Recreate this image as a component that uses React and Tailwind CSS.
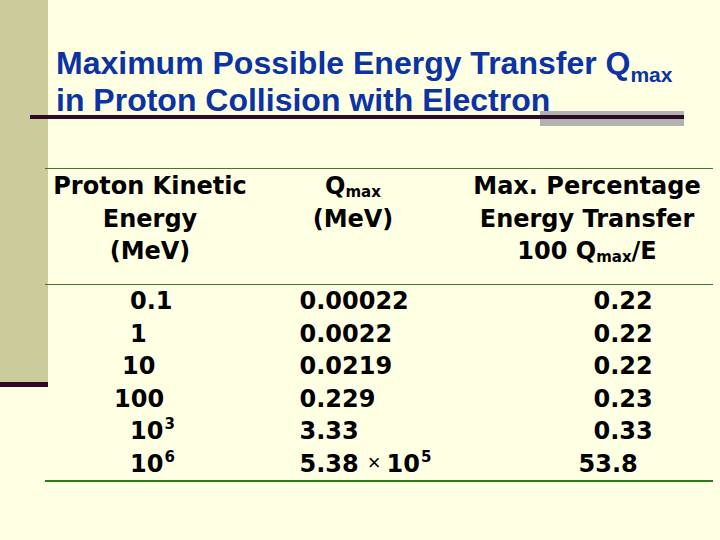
export default function App() {
  const rows = [
    { a: "0.1", ap: "pl-[85px]", b: "0.00022", c: "0.22", cp: "pl-[142.5px]" },
    { a: "1", ap: "pl-[85px]", b: "0.0022", c: "0.22", cp: "pl-[142.5px]" },
    { a: "10", ap: "pl-[77px]", b: "0.0219", c: "0.22", cp: "pl-[142.5px]" },
    { a: "100", ap: "pl-[69px]", b: "0.229", c: "0.23", cp: "pl-[142.5px]" },
    { a: "10", sup: "3", ap: "pl-[85px]", b: "3.33", c: "0.33", cp: "pl-[142.5px]" },
    { a: "10", sup: "6", ap: "pl-[85px]", b: null, c: "53.8", cp: "pl-[127.5px]" },
  ];
  return (
    <div className="w-[720px] h-[540px] bg-[#ffffe3] flex overflow-hidden">
      <div className="w-[48px] shrink-0 flex flex-col">
        <div className="h-[382px] bg-[#cbcb9b]" />
        <div className="h-[5px] bg-[#2e0a28]" />
      </div>
      <div className="flex-1 flex flex-col">
        <div className="pt-[45px] pl-[8px] font-['Liberation_Sans',sans-serif] font-bold text-[32px] leading-[36.5px] text-[#0b33a3] whitespace-nowrap">
          <div>
            Maximum Possible Energy Transfer Q
            <span className="relative top-[8px] text-[21px] leading-none">max</span>
          </div>
          <div>in Proton Collision with Electron</div>
        </div>
        <div className="relative ml-[-18px] w-[654px] h-[4px] mt-[-3px]">
          <div className="absolute left-[510px] top-[-4px] w-[144px] h-[15px] bg-[#b2b2b2]" />
          <div className="absolute inset-0 bg-[#2e0a28]" />
        </div>
        <div className="ml-[-3px] w-[668px] mt-[49px] font-['DejaVu_Sans',sans-serif] font-bold text-[24px] leading-[32.5px] text-black whitespace-nowrap">
          <div className="h-px bg-[#3b7a2b]" />
          <div className="grid grid-cols-[210px_196px_262px] pt-[1px] pb-[16.5px] text-center">
            <div>
              <div>Proton Kinetic</div>
              <div>Energy</div>
              <div>(MeV)</div>
            </div>
            <div>
              <div>
                Q<span className="relative top-[3px] text-[15px] leading-none">max</span>
              </div>
              <div>(MeV)</div>
            </div>
            <div className="pl-[10px]">
              <div>Max. Percentage</div>
              <div>Energy Transfer</div>
              <div>
                100 Q<span className="relative top-[3px] text-[15px] leading-none">max</span>/E
              </div>
            </div>
          </div>
          <div className="h-px bg-[#3b7a2b]" />
          <div className="flex flex-col">
            {rows.map((r, i) => (
              <div key={i} className="grid grid-cols-[210px_196px_262px] h-[32.5px]">
                <div className={r.ap}>
                  {r.a}
                  {r.sup && (
                    <span className="relative top-[-10px] ml-[1px] text-[15px] leading-none">{r.sup}</span>
                  )}
                </div>
                <div className="pl-[44.5px]">
                  {r.b !== null ? (
                    r.b
                  ) : (
                    <>
                      5.38
                      <span className="relative top-[-2px] font-normal font-['Liberation_Sans',sans-serif] text-[22px] leading-none ml-[9px] mr-[6px]">
                        ×
                      </span>
                      10
                      <span className="relative top-[-10px] ml-[1px] text-[15px] leading-none">5</span>
                    </>
                  )}
                </div>
                <div className={r.cp}>{r.c}</div>
              </div>
            ))}
          </div>
          <div className="h-[2px] bg-[#2d7a1d]" />
        </div>
      </div>
    </div>
  );
}
